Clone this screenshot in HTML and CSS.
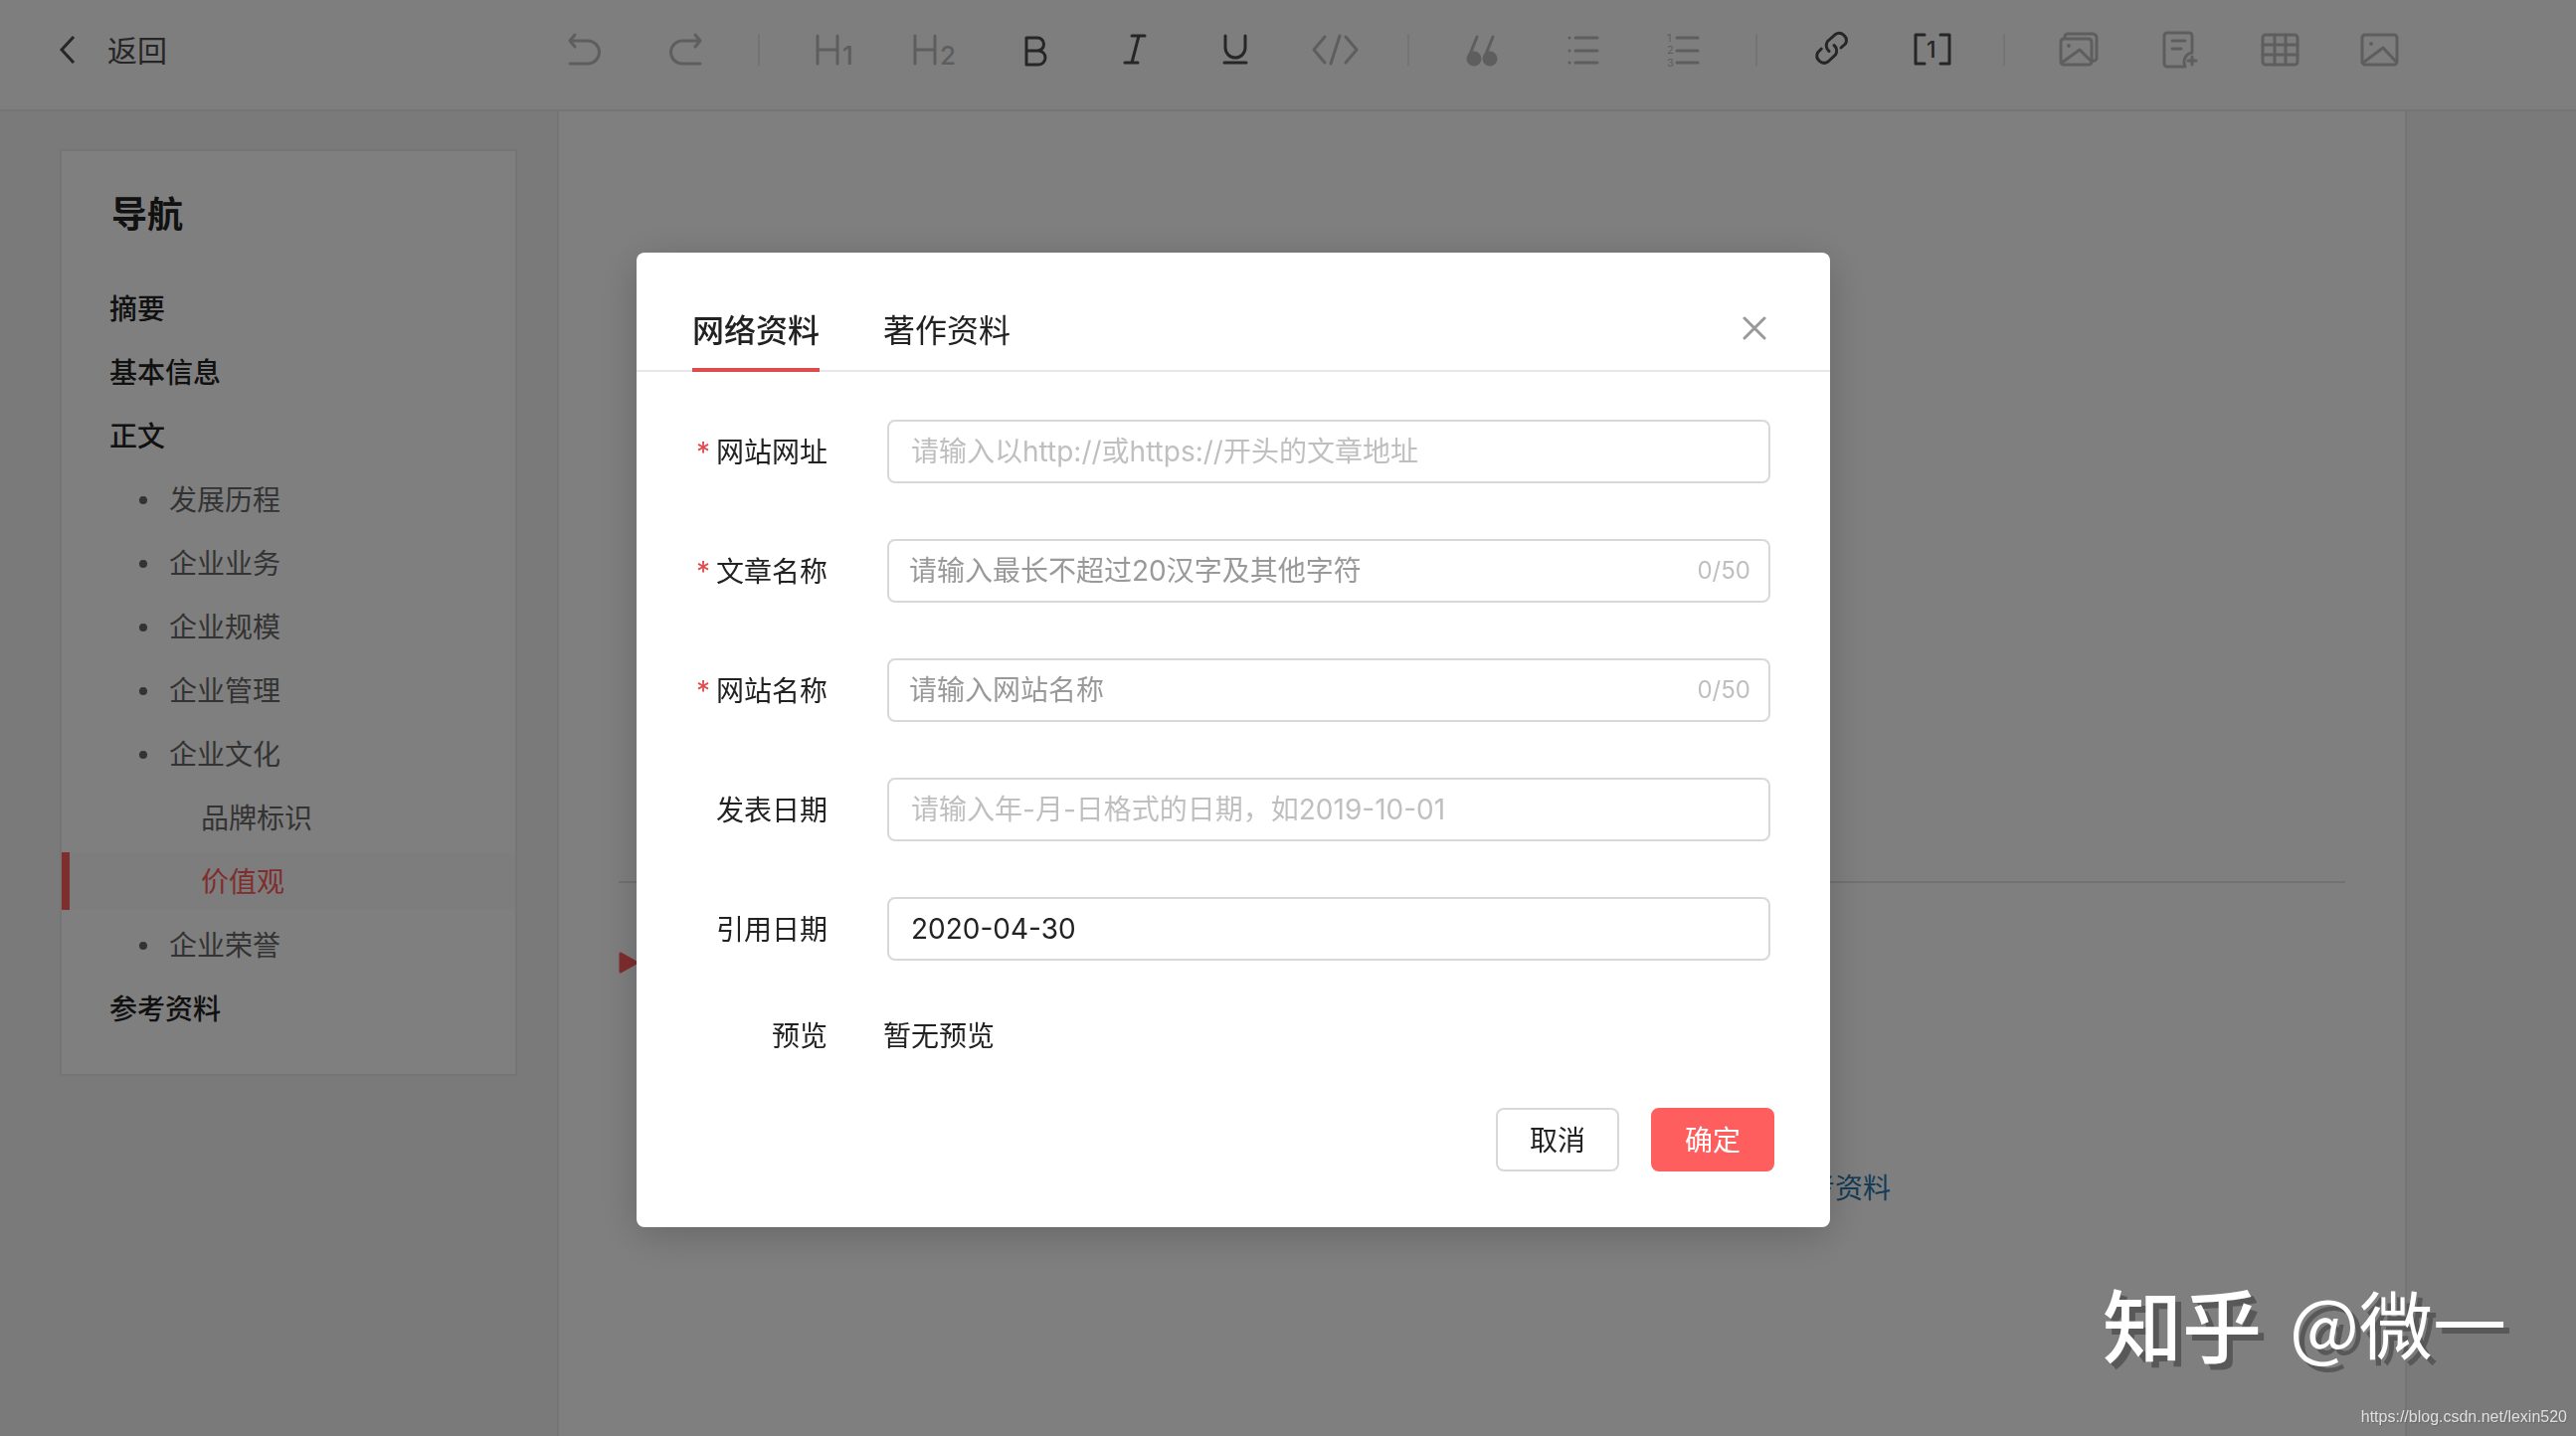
FILE: index.html
```html
<!DOCTYPE html>
<html lang="zh-CN">
<head>
<meta charset="utf-8">
<title>词条编辑</title>
<link rel="stylesheet" href="styles.css">
</head>
<body>
<div class="page">
  <header class="topbar">
    <a class="back" href="#">
      <svg class="back-icon" viewBox="0 0 16 28"><path d="M14 1 2 14l12 13"/></svg>
      <span class="back-text">返回</span>
    </a>
    <div class="tools">
      <button class="tool" aria-label="撤销"><svg class="icon" viewBox="0 0 48 48"><path d="M9 38H27a11 11 0 0 0 0-23H9M14 9 9 15l5 6"/></svg></button>
      <button class="tool" aria-label="重做"><svg class="icon" viewBox="0 0 48 48"><path d="M39 38H21a11 11 0 0 1 0-23H39M34 9l5 6-5 6"/></svg></button>
      <span class="divider"></span>
      <button class="tool" aria-label="一级标题"><svg class="icon" viewBox="0 0 48 48"><path d="M9 10v28M29 10v28M9 24h20"/><text class="digit" x="34" y="39">1</text></svg></button>
      <button class="tool" aria-label="二级标题"><svg class="icon" viewBox="0 0 48 48"><path d="M6 10v28M26 10v28M6 24h20"/><text class="digit" x="31" y="39">2</text></svg></button>
      <button class="tool dark" aria-label="加粗"><svg class="icon" viewBox="0 0 48 48"><path d="M17 12h11a6.500 6.500 0 0 1 0 13H17h12a7 7 0 0 1 0 14H17z"/></svg></button>
      <button class="tool dark" aria-label="斜体"><svg class="icon" viewBox="0 0 48 48"><path d="M22 10h13M15 37h13M29 10 22 37"/></svg></button>
      <button class="tool dark" aria-label="下划线"><svg class="icon" viewBox="0 0 48 48"><path d="M15 10v12a10 10 0 0 0 20 0V10M14 37h22"/></svg></button>
      <button class="tool" aria-label="代码"><svg class="icon" viewBox="0 0 48 48"><path d="M14 11 3 24l11 13M35 11l11 13-11 13M29 10 20 38"/></svg></button>
      <span class="divider"></span>
      <button class="tool" aria-label="引用"><svg class="icon" viewBox="0 0 48 48"><path d="M19 11 11 31M35 11l-8 20"/><circle class="solid" cx="16" cy="33" r="6"/><circle class="solid" cx="32" cy="33" r="6"/></svg></button>
      <button class="tool" aria-label="无序列表"><svg class="icon" viewBox="0 0 48 48"><path d="M17 12h22M17 25h22M17 37h22M11 12h0M11 25h0M11 37h0"/></svg></button>
      <button class="tool" aria-label="有序列表"><svg class="icon" viewBox="0 0 48 48"><path d="M18 12h21M18 25h21M18 37h21"/><text class="tiny" x="8" y="16">1</text><text class="tiny" x="8" y="28">2</text><text class="tiny" x="8" y="41">3</text></svg></button>
      <span class="divider"></span>
      <button class="tool dark" aria-label="链接"><svg class="icon" viewBox="0 0 48 48"><path d="M23 25.500A7.500 7.500 0 0 1 21.500 15.500L29 8.800A7.200 7.200 0 0 1 39.500 18L35 22M28 19.500A7.500 7.500 0 0 1 29.500 29L22 36A7.200 7.200 0 0 1 11.500 27L15.300 23"/></svg></button>
      <button class="tool dark" aria-label="参考资料"><svg class="icon" viewBox="0 0 48 48"><path d="M18 9H9v29h9M34 9h9v29h-9"/><text class="ref" x="20" y="32">1</text></svg></button>
      <span class="divider"></span>
      <button class="tool" aria-label="图册"><svg class="icon" viewBox="0 0 48 48"><path d="M11 12v-1a3 3 0 0 1 3-3h25a4 4 0 0 1 4 4v20a3 3 0 0 1-4 3"/><rect x="7" y="13" width="31" height="26" rx="3"/><path d="M8 37 26 24l12 12"/><circle class="dot" cx="15" cy="20" r="2"/></svg></button>
      <button class="tool" aria-label="模块"><svg class="icon" viewBox="0 0 48 48"><path d="M38 27V10a3 3 0 0 0-3-3H13a3 3 0 0 0-3 3v28a3 3 0 0 0 3 3h18c-3-7 1-13 7-14M18 15h13M18 23h9M38 31v8M34 35h8"/></svg></button>
      <button class="tool" aria-label="表格"><svg class="icon" viewBox="0 0 48 48"><rect x="8" y="9" width="35" height="30" rx="3"/><path d="M20 9v30M31 9v30M8 19h35M8 29h35"/></svg></button>
      <button class="tool" aria-label="图片"><svg class="icon" viewBox="0 0 48 48"><rect x="7" y="9" width="35" height="30" rx="3"/><path d="m8 37 20-15 13 14"/><circle class="dot" cx="16" cy="18" r="2"/></svg></button>
    </div>
  </header>

  <div class="body">
    <aside class="side">
      <nav class="outline">
        <h2 class="outline-title">导航</h2>
        <ul class="outline-list">
          <li><a class="entry" href="#">摘要</a></li>
          <li><a class="entry" href="#">基本信息</a></li>
          <li><a class="entry" href="#">正文</a></li>
          <li><a class="entry sub" href="#">发展历程</a></li>
          <li><a class="entry sub" href="#">企业业务</a></li>
          <li><a class="entry sub" href="#">企业规模</a></li>
          <li><a class="entry sub" href="#">企业管理</a></li>
          <li><a class="entry sub" href="#">企业文化</a></li>
          <li><a class="entry leaf" href="#">品牌标识</a></li>
          <li><a class="entry leaf active" href="#">价值观</a></li>
          <li><a class="entry sub" href="#">企业荣誉</a></li>
          <li><a class="entry" href="#">参考资料</a></li>
        </ul>
      </nav>
    </aside>
    <main class="editor">
      <div class="section"></div>
      <svg class="marker" viewBox="0 0 20 22"><path d="M2 2v18l16-9z"/></svg>
      <p class="add-ref"><a class="ref-link" href="#">参考资料</a></p>
    </main>
  </div>
</div>

<div class="overlay">
  <div class="dialog" role="dialog" aria-modal="true">
    <div class="dialog-head">
      <div class="tabs" role="tablist">
        <button class="tab current" role="tab" aria-selected="true">网络资料</button>
        <button class="tab" role="tab" aria-selected="false">著作资料</button>
      </div>
      <button class="close" aria-label="关闭"><svg class="close-icon" viewBox="0 0 24 24"><path d="m2 2 20 20M22 2 2 22"/></svg></button>
    </div>
    <form class="form">
      <div class="row">
        <label class="label required" for="url">网站网址</label>
        <div class="field"><input class="input" id="url" type="text" placeholder="请输入以http://或https://开头的文章地址"></div>
      </div>
      <div class="row">
        <label class="label required" for="title">文章名称</label>
        <div class="field counted"><input class="input" id="title" type="text" placeholder="请输入最长不超过20汉字及其他字符"><span class="count">0/50</span></div>
      </div>
      <div class="row">
        <label class="label required" for="site">网站名称</label>
        <div class="field counted"><input class="input" id="site" type="text" placeholder="请输入网站名称"><span class="count">0/50</span></div>
      </div>
      <div class="row">
        <label class="label" for="published">发表日期</label>
        <div class="field"><input class="input" id="published" type="text" placeholder="请输入年-月-日格式的日期，如2019-10-01"></div>
      </div>
      <div class="row">
        <label class="label" for="cited">引用日期</label>
        <div class="field"><input class="input" id="cited" type="text" value="2020-04-30"></div>
      </div>
      <div class="row preview">
        <span class="label">预览</span>
        <output class="preview-text">暂无预览</output>
      </div>
      <div class="actions">
        <button class="btn" type="button">取消</button>
        <button class="btn primary" type="button">确定</button>
      </div>
    </form>
  </div>
</div>

<div class="watermark"><span class="brand">知乎</span><span class="author">@微一</span></div>
<div class="source">https://blog.csdn.net/lexin520</div>
</body>
</html>
```

FILE: styles.css
```css
* {
  box-sizing: border-box;
}

body {
  margin: 0;
  min-height: 100vh;
  font-family: Inter, "Noto Sans CJK SC", sans-serif;
  font-size: 28px;
  line-height: 36px;
  color: #222;
  background: #f4f4f4;
}

a {
  color: inherit;
  text-decoration: none;
}

button,
input {
  margin: 0;
  font: inherit;
  color: inherit;
}

button {
  padding: 0;
  border: 0;
  background: none;
  cursor: pointer;
}

/* Page behind the dialog */
.page {
  display: flex;
  flex-direction: column;
  min-height: 100vh;
}

.topbar {
  display: grid;
  grid-template-columns: 560px 1fr;
  align-items: center;
  height: 112px;
  padding-bottom: 10px;
  border-bottom: 2px solid #ebebeb;
  background: #fcfcfc;
}

.back {
  display: flex;
  align-items: center;
  gap: 32px;
  padding-left: 60px;
  font-size: 30px;
  color: #4c4c4c;
}

.back-text {
  padding-top: 2px;
}

.back-icon {
  width: 16px;
  height: 28px;
  fill: none;
  stroke: currentColor;
  stroke-width: 3;
}

.tools {
  display: flex;
  align-items: center;
  gap: 45px;
}

.tool {
  display: flex;
  justify-content: center;
  width: 56px;
  color: #bcbcbc;
}

.tool.dark {
  color: #4c4c4c;
}

.icon {
  width: 48px;
  height: 48px;
  fill: none;
  stroke: currentColor;
  stroke-width: 3;
  stroke-linecap: round;
  stroke-linejoin: round;
}

.icon text {
  font-family: Inter, sans-serif;
  fill: currentColor;
  stroke: none;
}

.digit {
  font-size: 26px;
  font-weight: 500;
}

.tiny {
  font-size: 11px;
}

.ref {
  font-size: 23px;
  font-weight: 500;
}

.solid {
  fill: currentColor;
}

.dot {
  fill: currentColor;
  stroke: none;
}

.divider {
  width: 2px;
  height: 32px;
  background: #e9e9e9;
}

.body {
  flex: 1;
  display: grid;
  grid-template-columns: 560px 1fr 170px;
}

.side {
  padding: 38px 40px 38px 60px;
}

.outline {
  padding: 38px 0 37px;
  border: 2px solid #ebebeb;
  background: #fff;
}

.outline-title {
  margin: 0 0 39px;
  padding-left: 50px;
  font-size: 36px;
  line-height: 52px;
  font-weight: 700;
}

.outline-list {
  display: flex;
  flex-direction: column;
  gap: 6px;
  margin: 0;
  padding: 0;
  list-style: none;
}

.entry {
  display: flex;
  align-items: center;
  height: 58px;
  padding: 2px 0 0 48px;
  font-weight: 500;
}

.entry.sub,
.entry.leaf {
  font-weight: 400;
  color: #666;
}

.entry.sub {
  gap: 22px;
  padding-left: 78px;
}

.entry.sub::before {
  content: "";
  width: 8px;
  height: 8px;
  border-radius: 50%;
  background: currentColor;
}

.entry.leaf {
  padding-left: 140px;
}

.entry.active {
  padding-left: 132px;
  border-left: 8px solid #ff5c5c;
  color: #ff5c5c;
  background: #fafafa;
}

.editor {
  padding: 0 60px;
  border: solid #ebebeb;
  border-width: 0 2px;
  background: #fff;
}

.section {
  height: 776px;
  border-bottom: 2px solid #e4e4e4;
}

.marker {
  display: block;
  width: 20px;
  height: 22px;
  margin-top: 69px;
  fill: #ff5c5c;
  stroke: #ff5c5c;
  stroke-width: 3;
  stroke-linejoin: round;
}

.add-ref {
  margin: 198px 0 0;
  padding-right: 457px;
  text-align: right;
}

.ref-link {
  color: #2a76ac;
}

/* Dialog */
.overlay {
  position: fixed;
  inset: 0;
  display: flex;
  justify-content: center;
  align-items: flex-start;
  padding: 254px 110px 0 0;
  background: rgba(0, 0, 0, .5);
}

.dialog {
  width: 1200px;
  border-radius: 8px;
  background: #fff;
  box-shadow: 0 8px 40px rgba(0, 0, 0, .2);
}

.dialog-head {
  display: flex;
  justify-content: space-between;
  align-items: flex-end;
  height: 120px;
  padding: 0 64px 0 56px;
  border-bottom: 2px solid #e8e8e8;
}

.tabs {
  display: flex;
  gap: 64px;
  margin-bottom: -2px;
}

.tab {
  padding: 0 0 17px;
  border-bottom: 4px solid transparent;
  font-size: 32px;
  line-height: 40px;
}

.tab.current {
  border-color: #e04b4b;
  font-weight: 500;
}

.close {
  display: flex;
  margin-bottom: 30px;
}

.close-icon {
  width: 24px;
  height: 24px;
  fill: none;
  stroke: #999;
  stroke-width: 3;
  stroke-linecap: round;
}

.form {
  display: flex;
  flex-direction: column;
  gap: 56px;
  padding: 48px 56px 56px;
}

.row {
  display: grid;
  grid-template-columns: 136px 1fr;
  align-items: center;
  gap: 60px;
  padding-right: 4px;
}

.row.preview {
  gap: 56px;
  height: 36px;
}

.label,
.preview-text {
  padding-top: 2px;
}

.label {
  text-align: right;
}

.required::before {
  content: "*";
  margin-right: 6px;
  font-size: 28px;
  color: #e04b4b;
}

.field {
  display: flex;
  align-items: center;
  height: 64px;
  padding: 0 22px;
  border: 2px solid #d8d8d8;
  border-radius: 8px;
}

.field.counted {
  padding: 0 18px 0 20px;
}

.input {
  flex: 1;
  min-width: 0;
  height: 60px;
  padding: 0;
  border: 0;
  outline: 0;
  background: none;
}

.input::placeholder {
  color: #bfbfbf;
}

.counted .input::placeholder {
  color: #999;
}

.count {
  font-size: 24px;
  color: #bfbfbf;
}

.actions {
  display: flex;
  justify-content: flex-end;
  gap: 32px;
}

.btn {
  width: 124px;
  height: 64px;
  padding-top: 1px;
  border: 2px solid #d8d8d8;
  border-radius: 8px;
}

.btn.primary {
  border-color: #ff5e5e;
  color: #fff;
  background: #ff5e5e;
}

/* Image marks laid over everything */
.watermark {
  position: fixed;
  right: 70px;
  bottom: 65px;
  display: flex;
  align-items: center;
  gap: 28px;
  line-height: 100px;
  color: #fff;
  font-family: "Noto Sans CJK SC", sans-serif;
  text-shadow: 6px 6px 0 #585858;
}

.brand {
  font-size: 80px;
  font-weight: 500;
}

.author {
  font-size: 74px;
}

.source {
  position: fixed;
  right: 9px;
  bottom: 9px;
  font-family: "Liberation Sans", sans-serif;
  font-size: 16px;
  line-height: 20px;
  color: #e0e0e0;
  text-shadow: 1px 1px 1px #666;
}
```
